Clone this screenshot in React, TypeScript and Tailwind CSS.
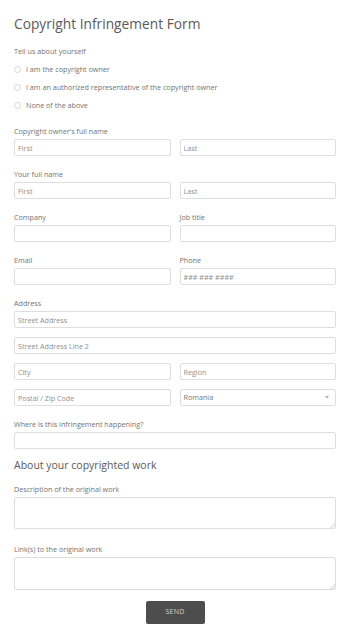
import React from "react";

const font = { fontFamily: '"Open Sans", "Noto Sans", sans-serif' };

function Label({ children }: { children: React.ReactNode }) {
  return (
    <div className="text-[7.2px] leading-[10px] text-[#737373] mb-[3px] whitespace-nowrap">
      {children}
    </div>
  );
}

function Input({ placeholder = "" }: { placeholder?: string }) {
  return (
    <input
      readOnly
      placeholder={placeholder}
      className="block w-full h-[17px] border border-[#dedede] rounded-[2px] bg-white pl-[3px] text-[7.2px] text-[#777] placeholder:text-[#8f8f8f] outline-none"
      style={font}
    />
  );
}

function TextArea({ h }: { h: string }) {
  return (
    <div className="relative">
      <textarea
        readOnly
        className={`block w-full ${h} border border-[#dedede] rounded-[2px] bg-white outline-none resize-none`}
      />
      <svg className="absolute right-[1px] bottom-[1px]" width="5" height="5" viewBox="0 0 5 5">
        <path d="M5 0 L0 5 M5 2.5 L2.5 5" stroke="#bbb" strokeWidth="0.6" />
      </svg>
    </div>
  );
}

function Radio({ text }: { text: string }) {
  return (
    <div className="flex items-center h-[18px]">
      <span className="w-[7px] h-[7px] rounded-full border border-[#d4d4d4] bg-white mr-[5px] shrink-0" />
      <span className="text-[7.2px] text-[#737373] whitespace-nowrap">{text}</span>
    </div>
  );
}

export default function App() {
  return (
    <div className="w-[350px] h-[638px] bg-white pl-[14px] pr-[14px] pt-[14px]" style={font}>
      <h1 className="text-[13.75px] leading-[20px] text-[#5a5a5a] font-normal whitespace-nowrap">
        Copyright Infringement Form
      </h1>

      <div className="mt-[12px]">
        <div className="text-[7.2px] leading-[10px] text-[#737373] mb-[4px]">Tell us about yourself</div>
        <Radio text="I am the copyright owner" />
        <Radio text="I am an authorized representative of the copyright owner" />
        <Radio text="None of the above" />
      </div>

      <div className="mt-[12px] mb-[13px]">
        <Label>Copyright owner's full name</Label>
        <div className="grid grid-cols-2 gap-[9px]">
          <Input placeholder="First" />
          <Input placeholder="Last" />
        </div>
      </div>

      <div className="mb-[13px]">
        <Label>Your full name</Label>
        <div className="grid grid-cols-2 gap-[9px]">
          <Input placeholder="First" />
          <Input placeholder="Last" />
        </div>
      </div>

      <div className="grid grid-cols-2 gap-x-[9px] mb-[13px]">
        <div>
          <Label>Company</Label>
          <Input />
        </div>
        <div>
          <Label>Job title</Label>
          <Input />
        </div>
      </div>

      <div className="grid grid-cols-2 gap-x-[9px] mb-[13px]">
        <div>
          <Label>Email</Label>
          <Input />
        </div>
        <div>
          <Label>Phone</Label>
          <Input placeholder="### ### ####" />
        </div>
      </div>

      <div className="mb-[13px]">
        <Label>Address</Label>
        <div className="flex flex-col gap-[9px]">
          <Input placeholder="Street Address" />
          <Input placeholder="Street Address Line 2" />
          <div className="grid grid-cols-2 gap-[9px]">
            <Input placeholder="City" />
            <Input placeholder="Region" />
          </div>
          <div className="grid grid-cols-2 gap-[9px]">
            <Input placeholder="Postal / Zip Code" />
            <div className="h-[17px] border border-[#dedede] rounded-[2px] bg-white pl-[3px] pr-[6px] flex items-center justify-between">
              <span className="text-[7.2px] text-[#777]">Romania</span>
              <svg width="4" height="2.5" viewBox="0 0 4 2.5">
                <path d="M0 0 L4 0 L2 2.5 Z" fill="#aaa" />
              </svg>
            </div>
          </div>
        </div>
      </div>

      <div>
        <Label>Where is this infringement happening?</Label>
        <Input />
      </div>

      <h2 className="mt-[8px] text-[10.5px] leading-[16px] text-[#5a5a5a] font-normal whitespace-nowrap">
        About your copyrighted work
      </h2>

      <div className="mt-[11px]">
        <Label>Description of the original work</Label>
        <TextArea h="h-[32px]" />
      </div>

      <div className="mt-[15px]">
        <Label>Link(s) to the original work</Label>
        <TextArea h="h-[33px]" />
      </div>

      <div className="flex justify-center mt-[11px]">
        <button
          className="w-[59px] h-[23px] bg-[#4d4d4d] rounded-[2px] text-[7px] text-[#d4d4d4] tracking-[0.2px]"
          style={font}
        >
          SEND
        </button>
      </div>
    </div>
  );
}
